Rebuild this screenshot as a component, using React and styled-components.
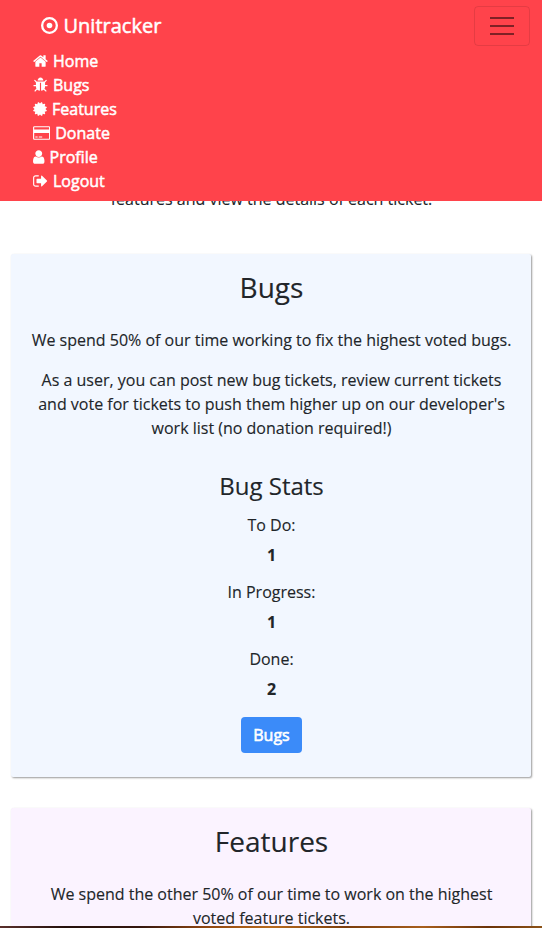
import React from "react";
import styled, { createGlobalStyle } from "styled-components";

const GlobalStyle = createGlobalStyle`
  *, *::before, *::after { box-sizing: border-box; }
  html, body { margin: 0; height: 100%; overflow: hidden; }
  body {
    background: #fff;
    color: #212529;
    font-family: "Open Sans", "Noto Sans", sans-serif;
    font-size: 16px;
    line-height: 24px;
    -webkit-text-stroke: 0.12px currentColor;
  }
`;

const Page = styled.div`
  display: flex;
  flex-direction: column;
  height: 928px;
  overflow: hidden;
`;

const Navbar = styled.header`
  flex: none;
  height: 201px;
  padding: 6px 12px 8px 33px;
  background: #ff434b;
  color: #fff;
`;

const NavTop = styled.div`
  display: flex;
  align-items: center;
  justify-content: space-between;
  height: 40px;
  margin-bottom: 3px;
`;

const Brand = styled.a`
  display: flex;
  align-items: center;
  gap: 5.5px;
  height: 30px;
  margin: 0 0 1px 8px;
  font-size: 20px;
  line-height: 30px;
  -webkit-text-stroke: 0.5px #fff;
`;

const Toggler = styled.button`
  display: flex;
  flex-direction: column;
  align-items: center;
  justify-content: center;
  gap: 6px;
  width: 56px;
  height: 40px;
  padding: 0;
  background: transparent;
  border: 1px solid rgba(0, 0, 0, 0.1);
  border-radius: 4px;
`;

const TogglerBar = styled.span`
  width: 24px;
  height: 2px;
  background: rgba(0, 0, 0, 0.5);
`;

const NavList = styled.ul`
  margin: 0;
  padding: 0;
  list-style: none;
`;

const NavItem = styled.li`
  display: flex;
  align-items: center;
  gap: 5px;
  height: 24px;
  -webkit-text-stroke: 0.5px #fff;
`;

const Glyph = styled.svg`
  flex: none;
  display: block;
  width: ${(p) => p.$w}px;
  height: ${(p) => p.$size || 16}px;
  fill: currentColor;
  stroke: none;
`;

const Content = styled.main`
  flex: 1;
  min-height: 0;
  overflow: hidden;
  padding: 0 11px;
  text-align: center;
`;

const Intro = styled.p`
  margin: -14px 0 43px;
  padding-left: 1px;
`;

const Card = styled.section`
  display: flex;
  flex-direction: column;
  align-items: center;
  width: 520px;
  height: 523px;
  margin-bottom: 31px;
  padding: 16px 19px 0 20px;
  background: ${(p) => p.$tint};
  border-radius: 2px;
  box-shadow: 1px 1px 2px rgba(0, 0, 0, 0.4);
`;

const Title = styled.h2`
  margin: 0 0 24px;
  font-size: 28px;
  line-height: 34px;
  font-weight: 400;
`;

const Text = styled.p`
  margin: 0 0 16px;
  white-space: nowrap;
`;

const StatsTitle = styled.h3`
  margin: 15px 0 13px;
  font-size: 24px;
  line-height: 29px;
  font-weight: 400;
`;

const Stat = styled.div`
  display: flex;
  flex-direction: column;
  gap: 6px;
  margin-bottom: 13px;
`;

const StatValue = styled.strong`
  font-weight: 700;
`;

const Button = styled.a`
  width: 61px;
  height: 36px;
  margin-top: 3px;
  padding: 6px 0;
  border-radius: 4px;
  background: #3b8bf9;
  color: #fff;
  -webkit-text-stroke: 0.6px #fff;
`;

const PhotoStrip = styled.footer`
  flex: none;
  height: 2px;
  background: linear-gradient(90deg, #5a302c 0, #24100c 12%, #35170f 26%, #8f4510 38%, #b96b1d 50%, #7b3c0c 64%, #a85f1d 78%, #6b3209 90%, #8c5217 100%);
`;

const navItems = [
  {
    label: "Home", w: 15, box: "64 0 1664 1792",
    d: "M1472 992v480q0 26-19 45t-45 19h-384v-384h-256v384h-384q-26 0-45-19t-19-45v-480q0-1 .5-3t.5-3l575-474 575 474q1 2 1 6zm223-69l-62 74q-8 9-21 11h-3q-13 0-21-7l-692-577-692 577q-12 8-24 7-13-2-21-11l-62-74q-8-10-7-23.5t11-21.5l719-599q32-26 76-26t76 26l244 204v-195q0-14 9-23t23-9h192q14 0 23 9t9 23v408l219 182q10 8 11 21.5t-7 23.5z",
  },
  {
    label: "Bugs", w: 15, box: "64 0 1664 1792",
    d: "M1696 960q0 26-19 45t-45 19h-224q0 171-67 290l208 209q19 19 19 45t-19 45q-18 19-45 19t-45-19l-198-197q-5 5-15 13t-42 28.5-65 36.5-82 29-97 13v-896h-128v896q-51 0-101.5-13.5t-87-33-66-39-43.5-32.5l-15-14-183 207q-20 21-48 21-24 0-43-16-19-18-20.5-44.5t15.5-46.5l202-227q-58-114-58-274h-224q-26 0-45-19t-19-45 19-45 45-19h224v-294l-173-173q-19-19-19-45t19-45 45-19 45 19l173 173h844l173-173q19-19 45-19t45 19 19 45-19 45l-173 173v294h224q26 0 45 19t19 45zm-480-576h-640q0-133 93.5-226.5t226.5-93.5 226.5 93.5 93.5 226.5z",
  },
  {
    label: "Features", w: 14, box: "128 0 1536 1792",
    d: "M1504 896l138 135q30 28 20 70-12 41-52 51l-188 48 53 186q12 41-19 70-29 31-70 19l-186-53-48 188q-10 40-51 52-12 2-19 2-31 0-51-22l-135-138-135 138q-28 30-70 20-41-11-51-52l-48-188-186 53q-41 12-70-19-31-29-19-70l53-186-188-48q-40-10-52-51-10-42 20-70l138-135-138-135q-30-28-20-70 12-41 52-51l188-48-53-186q-12-41 19-70 29-31 70-19l186 53 48-188q10-41 51-51 41-12 70 19l135 139 135-139q29-30 70-19 41 10 51 51l48 188 186-53q41-12 70 19 31 29 19 70l-53 186 188 48q40 10 52 51 10 42-20 70z",
  },
  {
    label: "Donate", w: 17.25, box: "0 0 1920 1792",
    d: "M160 128h1600q66 0 113 47t47 113v1216q0 66-47 113t-113 47h-1600q-66 0-113-47t-47-113v-1216q0-66 47-113t113-47zm0 128q-13 0-22.5 9.5t-9.5 22.5v224h1664v-224q0-13-9.5-22.5t-22.500-9.500zm1600 1280q13 0 22.500-9.500t9.500-22.500v-608h-1664v608q0 13 9.500 22.500t22.500 9.500zm-1504-128v-128h256v128zm384 0v-128h384v128z",
  },
  {
    label: "Profile", w: 11.5, box: "256 0 1280 1792",
    d: "M1536 1399q0 109-62.5 187t-150.5 78h-854q-88 0-150.5-78t-62.5-187q0-85 8.5-160.5t31.5-152 58.5-131 94-89 134.5-34.5q131 128 313 128t313-128q76 0 134.5 34.5t94 89 58.5 131 31.5 152 8.5 160.5zm-256-887q0 159-112.5 271.5t-271.5 112.5-271.5-112.5-112.5-271.5 112.5-271.5 271.5-112.5 271.5 112.5 112.5 271.5z",
  },
  {
    label: "Logout", w: 15, box: "64 0 1664 1792",
    d: "M704 1440q0 4 1 20t.5 26.5-3 23.5-10 19.5-20.5 6.5h-320q-119 0-203.5-84.5t-84.5-203.5v-704q0-119 84.5-203.5t203.5-84.5h320q13 0 22.5 9.5t9.5 22.5q0 4 1 20t.5 26.5-3 23.5-10 19.5-20.5 6.5h-320q-66 0-113 47t-47 113v704q0 66 47 113t113 47h312l11.5 1 11.5 3 8 5.5 7 9 2 13.5zm928-544q0 26-19 45l-544 544q-19 19-45 19t-45-19-19-45v-288h-448q-26 0-45-19t-19-45v-384q0-26 19-45t45-19h448v-288q0-26 19-45t45-19 45 19l544 544q19 19 19 45z",
  },
];

const bugStats = [
  ["To Do:", 1],
  ["In Progress:", 1],
  ["Done:", 2],
];

export default function App() {
  return (
    <>
      <GlobalStyle />
      <Page>
        <Navbar>
          <NavTop>
            <Brand>
              <Glyph $w={17} $size={17} viewBox="0 0 17 17" aria-hidden="true">
                <path fillRule="evenodd" d="M8.5 0a8.5 8.5 0 1 0 0 17a8.5 8.5 0 0 0 0-17zM8.5 2.3a6.2 6.2 0 1 1 0 12.4a6.2 6.2 0 0 1 0-12.4z" />
                <circle cx="8.5" cy="8.5" r="2.8" />
              </Glyph>
              Unitracker
            </Brand>
            <Toggler aria-label="Toggle navigation">
              <TogglerBar />
              <TogglerBar />
              <TogglerBar />
            </Toggler>
          </NavTop>
          <NavList>
            {navItems.map((item) => (
              <NavItem key={item.label}>
                <Glyph $w={item.w} viewBox={item.box} aria-hidden="true">
                  <path fillRule={item.label === "Donate" ? "evenodd" : "nonzero"} d={item.d} />
                </Glyph>
                {item.label}
              </NavItem>
            ))}
          </NavList>
        </Navbar>
        <Content>
          <Intro>features and view the details of each ticket.</Intro>
          <Card $tint="#f2f7ff">
            <Title>Bugs</Title>
            <Text>We spend 50% of our time working to fix the highest voted bugs.</Text>
            <Text>
              As a user, you can post new bug tickets, review current tickets
              <br />
              and vote for tickets to push them higher up on our developer's
              <br />
              work list (no donation required!)
            </Text>
            <StatsTitle>Bug Stats</StatsTitle>
            {bugStats.map(([label, value]) => (
              <Stat key={label}>
                <span>{label}</span>
                <StatValue>{value}</StatValue>
              </Stat>
            ))}
            <Button>Bugs</Button>
          </Card>
          <Card $tint="#fbf3ff">
            <Title>Features</Title>
            <Text>
              We spend the other 50% of our time to work on the highest
              <br />
              voted feature tickets.
            </Text>
          </Card>
        </Content>
        <PhotoStrip />
      </Page>
    </>
  );
}
